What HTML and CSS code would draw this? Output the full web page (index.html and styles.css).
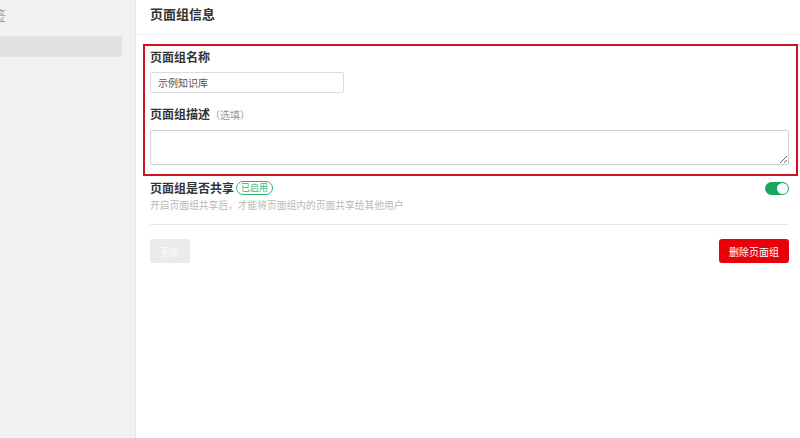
FILE: index.html
```html
<!DOCTYPE html>
<html lang="zh-CN">
<head>
<meta charset="utf-8">
<title>页面组信息</title>
<link rel="stylesheet" href="styles.css">
</head>
<body>
<div class="app">
  <aside class="sidebar">
    <div class="side-title">标签</div>
    <div class="side-item active"></div>
  </aside>
  <main class="main">
    <div class="header">页面组信息</div>
    <div class="content">
      <div class="highlight">
        <div class="field">
          <label class="label">页面组名称</label>
          <input class="input" type="text" value="示例知识库">
        </div>
        <div class="field field-desc">
          <label class="label">页面组描述<span class="optional">（选填）</span></label>
          <textarea class="textarea"></textarea>
        </div>
      </div>
      <div class="share">
        <div class="share-text">
          <div class="share-title">页面组是否共享<span class="badge">已启用</span></div>
          <div class="share-hint">开启页面组共享后，才能将页面组内的页面共享给其他用户</div>
        </div>
        <div class="toggle"><span class="knob"></span></div>
      </div>
      <div class="divider"></div>
      <div class="actions">
        <button class="btn btn-update" disabled>更新</button>
        <button class="btn btn-delete">删除页面组</button>
      </div>
    </div>
  </main>
</div>
</body>
</html>
```

FILE: styles.css
```css
* { box-sizing: border-box; }
html, body {
  margin: 0;
  padding: 0;
  height: 100%;
  background: #fff;
  font-family: "Noto Sans CJK SC", "Noto Sans", sans-serif;
  color: #333;
}
.app {
  display: flex;
  height: 438px;
  overflow: hidden;
}
.sidebar {
  width: 136px;
  flex: none;
  background: #f2f2f2;
  border-right: 1px solid #e6e6e6;
  overflow: hidden;
}
.side-title {
  margin-left: -20px;
  height: 36px;
  line-height: 30px;
  font-size: 13px;
  color: #999;
}
.side-item {
  width: 122px;
  height: 21px;
}
.side-item.active {
  background: #e2e2e2;
}
.main {
  flex: 1;
  min-width: 0;
}
.header {
  height: 35px;
  padding: 4px 0 0 14px;
  font-size: 13px;
  font-weight: 700;
  line-height: 20px;
  color: #333;
  border-bottom: 1px solid #efefef;
}
.content {
  padding: 0 11px 0 14px;
}
.highlight {
  margin: 9px -9px 0 -7px;
  padding: 2px 7px 9px 5px;
  border: 2px solid #cc1420;
}
.field {
  display: flex;
  flex-direction: column;
}
.label {
  font-size: 12px;
  font-weight: 700;
  line-height: 18px;
  color: #333;
}
.optional {
  font-size: 10px;
  font-weight: 400;
  color: #999;
}
.input {
  margin-top: 6px;
  width: 194px;
  height: 21px;
  padding: 0 7px;
  border: 1px solid #dcdcdc;
  border-radius: 2px;
  font-family: inherit;
  font-size: 10px;
  color: #555;
  outline: none;
}
.field-desc {
  margin-top: 12px;
}
.textarea {
  margin-top: 6px;
  width: 100%;
  height: 35px;
  border: 1px solid #cfcfcf;
  border-radius: 2px;
  font-family: inherit;
  outline: none;
}
.share {
  display: flex;
  justify-content: space-between;
  align-items: flex-start;
  margin-top: 3px;
}
.share-title {
  display: flex;
  align-items: center;
  font-size: 12px;
  font-weight: 700;
  line-height: 18px;
}
.badge {
  margin-left: 2px;
  padding: 0 4px;
  height: 14px;
  line-height: 12px;
  border: 1px solid #2bb673;
  border-radius: 8px;
  font-size: 9px;
  font-weight: 400;
  color: #2bb673;
}
.share-hint {
  margin-top: 1px;
  font-size: 9.75px;
  line-height: 14px;
  color: #b8b8b8;
}
.toggle {
  position: relative;
  width: 24px;
  height: 13px;
  margin-top: 3px;
  border-radius: 7px;
  background: #17a85f;
}
.knob {
  position: absolute;
  right: 1px;
  top: 1px;
  width: 11px;
  height: 11px;
  border-radius: 50%;
  background: #fff;
}
.divider {
  margin-top: 12px;
  border-top: 1px solid #e8e8e8;
}
.actions {
  display: flex;
  justify-content: space-between;
  margin-top: 14px;
}
.btn {
  height: 24px;
  border: none;
  border-radius: 2px;
  font-family: inherit;
  font-size: 10px;
  color: #fff;
  padding: 0;
}
.btn-update {
  width: 40px;
  background: #ebebeb;
  color: #fafafa;
}
.btn-delete {
  width: 70px;
  background: #e8000b;
  border-radius: 3px;
}
```
